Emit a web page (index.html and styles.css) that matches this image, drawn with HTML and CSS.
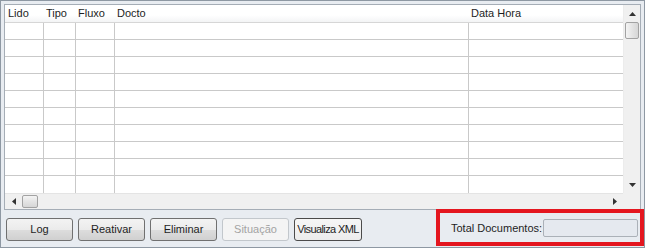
FILE: index.html
```html
<!DOCTYPE html>
<html lang="pt">
<head>
    <meta charset="UTF-8">
    <title>Documentos</title>
    <link rel="stylesheet" href="styles.css">
</head>
<body>
    <div class="window">
        <div class="grid">
            <div class="grid-body">
                <div class="row header">
                    <div class="cell first">Lido</div>
                    <div class="cell">Tipo</div>
                    <div class="cell">Fluxo</div>
                    <div class="cell">Docto</div>
                    <div class="cell">Data Hora</div>
                </div>
                <div class="row"><div class="cell"></div><div class="cell"></div><div class="cell"></div><div class="cell"></div><div class="cell"></div></div>
                <div class="row"><div class="cell"></div><div class="cell"></div><div class="cell"></div><div class="cell"></div><div class="cell"></div></div>
                <div class="row"><div class="cell"></div><div class="cell"></div><div class="cell"></div><div class="cell"></div><div class="cell"></div></div>
                <div class="row"><div class="cell"></div><div class="cell"></div><div class="cell"></div><div class="cell"></div><div class="cell"></div></div>
                <div class="row"><div class="cell"></div><div class="cell"></div><div class="cell"></div><div class="cell"></div><div class="cell"></div></div>
                <div class="row"><div class="cell"></div><div class="cell"></div><div class="cell"></div><div class="cell"></div><div class="cell"></div></div>
                <div class="row"><div class="cell"></div><div class="cell"></div><div class="cell"></div><div class="cell"></div><div class="cell"></div></div>
                <div class="row"><div class="cell"></div><div class="cell"></div><div class="cell"></div><div class="cell"></div><div class="cell"></div></div>
                <div class="row"><div class="cell"></div><div class="cell"></div><div class="cell"></div><div class="cell"></div><div class="cell"></div></div>
                <div class="row last"><div class="cell"></div><div class="cell"></div><div class="cell"></div><div class="cell"></div><div class="cell"></div></div>
            </div>

            <!-- barra de rolagem vertical -->
            <div class="vscroll">
                <div class="arrow">
                    <svg width="7" height="4" viewBox="0 0 7 4"><polygon points="3.5,0 7,4 0,4" fill="#333"/></svg>
                </div>
                <div class="thumb vthumb"></div>
                <div class="track"></div>
                <div class="arrow">
                    <svg width="7" height="4" viewBox="0 0 7 4"><polygon points="0,0 7,0 3.5,4" fill="#333"/></svg>
                </div>
            </div>

            <!-- barra de rolagem horizontal -->
            <div class="hscroll">
                <div class="arrow">
                    <svg width="4" height="7" viewBox="0 0 4 7"><polygon points="4,0 4,7 0,3.5" fill="#333"/></svg>
                </div>
                <div class="thumb hthumb"></div>
                <div class="track"></div>
                <div class="arrow">
                    <svg width="4" height="7" viewBox="0 0 4 7"><polygon points="0,0 4,3.5 0,7" fill="#333"/></svg>
                </div>
            </div>
            <div class="corner"></div>
        </div>

        <div class="footer">
            <button class="btn">Log</button>
            <button class="btn">Reativar</button>
            <button class="btn">Eliminar</button>
            <button class="btn" disabled>Situação</button>
            <button class="btn focused">Visualiza XML</button>

            <div class="total-box">
                <span class="total-label">Total Documentos:</span>
                <div class="total-field"></div>
            </div>
        </div>
    </div>
</body>
</html>
```

FILE: styles.css
```css
body {
    margin: 0;
    background-color: #ffffff;
    font-family: "Liberation Sans", Arial, sans-serif;
    font-size: 11px;
    color: #1e1e1e;
}
.window {
    width: 645px;
    height: 248px;
    box-sizing: border-box;
    border: 1px solid #8e98a3;
    background-color: #e8ecf1;
    padding: 3px 3px 0 3px;
    display: flex;
    flex-direction: column;
}
.grid {
    height: 206px;
    box-sizing: border-box;
    border: 1px solid #a5adb6;
    background-color: #ffffff;
    display: grid;
    grid-template-columns: 1fr 17px;
    grid-template-rows: 1fr 16px;
}
.grid-body {
    overflow: hidden;
    display: flex;
    flex-direction: column;
}
.row {
    display: grid;
    grid-template-columns: 39px 32px 39px 354px 1fr;
    height: 17px;
    flex: none;
    box-sizing: border-box;
    border-bottom: 1px solid #c9c9c9;
}
.row .cell {
    border-right: 1px solid #c9c9c9;
}
.row .cell:last-child {
    border-right: none;
}
.row.last {
    border-bottom: none;
}
.row.header {
    height: 18px;
    background: linear-gradient(#ffffff, #ffffff 60%, #f3f4f5);
    border-bottom: 1px solid #d6d6d6;
}
.row.header .cell {
    border-right: none;
    padding-left: 2px;
    line-height: 17px;
    white-space: nowrap;
}
.row.header .cell.first {
    padding-left: 3px;
}
.vscroll {
    display: flex;
    flex-direction: column;
    background-color: #f0f0f0;
    border-left: 1px solid #ececec;
}
.hscroll {
    display: flex;
    background-color: #f0f0f0;
    border-top: 1px solid #e4e4e4;
}
.arrow {
    flex: none;
    display: flex;
    align-items: center;
    justify-content: center;
}
.vscroll .arrow {
    height: 17px;
}
.hscroll .arrow {
    width: 17px;
}
.track {
    flex: 1;
}
.thumb {
    flex: none;
    box-sizing: border-box;
    border: 1px solid #a2a2a2;
    border-radius: 2px;
}
.vthumb {
    height: 17px;
    margin: 0 1px;
    background: linear-gradient(to right, #f4f4f4, #e4e4e4 50%, #d6d6d6);
}
.hthumb {
    width: 16px;
    margin: 1px 0;
    background: linear-gradient(#f4f4f4, #e4e4e4 50%, #d6d6d6);
}
.corner {
    background-color: #f0f0f0;
}
.footer {
    flex: 1;
    display: flex;
    align-items: center;
    gap: 5px;
    padding: 1px 0 0 2px;
}
.btn {
    width: 67px;
    height: 23px;
    box-sizing: border-box;
    border: 1px solid #707070;
    border-radius: 3px;
    background: linear-gradient(#f3f3f3, #ebebeb 50%, #dddddd 51%, #d0d0d0);
    font-family: "Liberation Sans", Arial, sans-serif;
    font-size: 11px;
    color: #1e1e1e;
    padding: 0;
    white-space: nowrap;
}
.btn:disabled {
    border-color: #c2c7cc;
    background: #f4f4f4;
    color: #a3a3a3;
}
.btn.focused {
    width: 68px;
    border-color: #4b4b4b;
    background: linear-gradient(#f6f6f6, #ececec);
    letter-spacing: -0.6px;
}
.total-box {
    margin-left: auto;
    margin-right: -3px;
    align-self: stretch;
    margin-top: -2px;
    margin-bottom: 1px;
    border: 4px solid #e4161f;
    display: flex;
    align-items: center;
    padding-left: 11px;
    width: 208px;
    box-sizing: border-box;
}
.total-label {
    white-space: nowrap;
}
.total-field {
    margin-left: 1px;
    width: 95px;
    height: 18px;
    box-sizing: border-box;
    border: 1px solid #abb1b8;
    border-radius: 2px;
    background-color: #e5e9ef;
}
```
